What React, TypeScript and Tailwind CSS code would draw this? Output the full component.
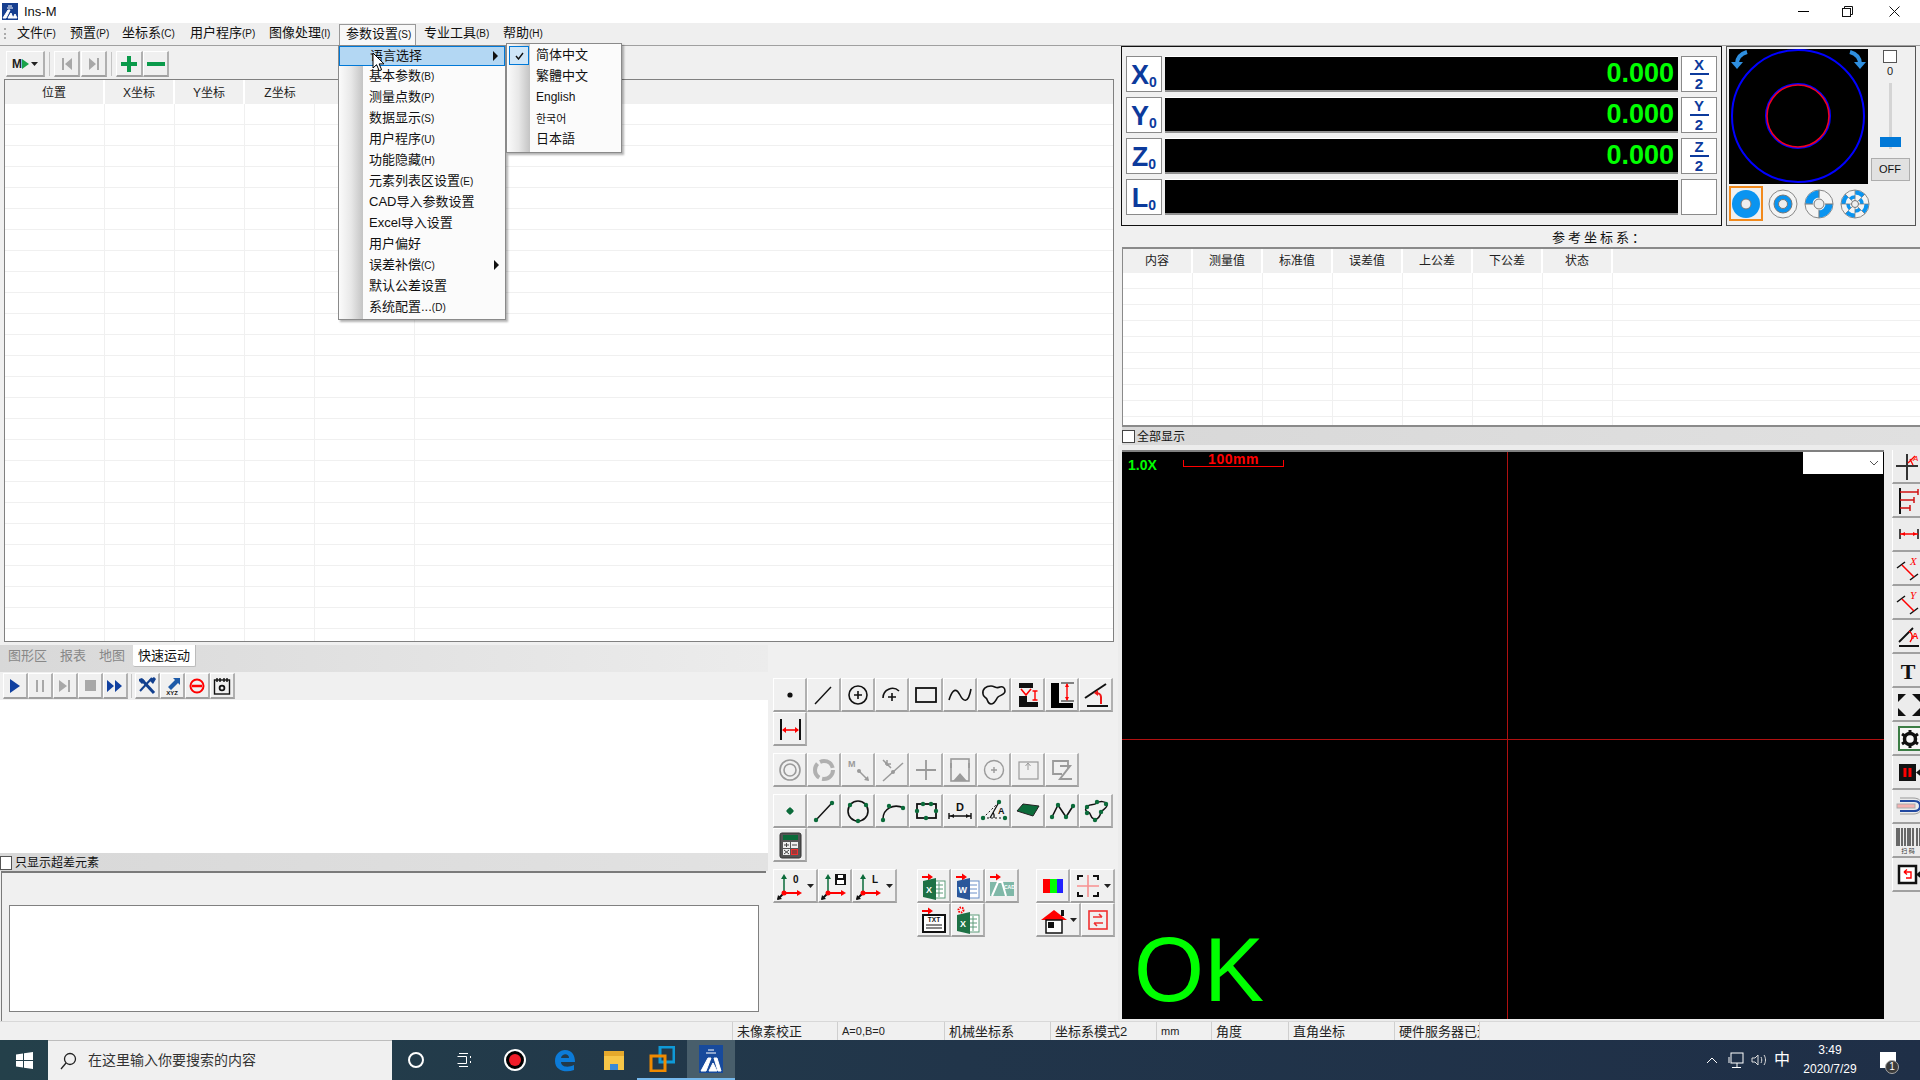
import type { ReactNode } from 'react'

const ink = '#111'
const green = '#0b6b3a'
const red = '#f01818'
const gray = '#9a9a9a'

function Ic({ children, size = 28 }: { children: ReactNode; size?: number }) {
  return (
    <svg width={size} height={size} viewBox="0 0 28 28" fill="none" className="shrink-0">
      {children}
    </svg>
  )
}

function Tool({ children, className = 'w-[34px] h-[34px]' }: { children?: ReactNode; className?: string }) {
  return (
    <div className={`flex items-center justify-center shrink-0 overflow-hidden bg-[#f0f0f0] border-t border-l border-r-2 border-b-2 border-t-white border-l-white border-r-[#b0b0b0] border-b-[#a0a0a0] ${className}`}>
      {children}
    </div>
  )
}

const Caret = () => (
  <svg width="7" height="4" viewBox="0 0 7 4" className="ml-[2px] shrink-0"><path d="M0 0h7L3.5 4z" fill="#222" /></svg>
)

const XlsIcon = () => (
  <>
    <rect x="12" y="9" width="13" height="17" fill="#fff" stroke="#5d9c7a" />
    <path d="M15 13h8M15 17h8M15 21h8M19 10v15" stroke="#5d9c7a" />
    <path d="M3 9l13-3v22L3 25z" fill="#1e7145" />
    <text x="6" y="21" fontSize="9" fontWeight="700" fill="#fff" fontFamily="Liberation Sans">X</text>
  </>
)
const RedArrow = () => <path d="M2 4h6V1.5L13 5l-5 3.5V6H2z" fill="#f00" />

const axes = (
  <>
    <path d="M7 22V5" stroke={green} strokeWidth="1.5" />
    <path d="M7 2l-3 5h6z" fill={green} />
    <path d="M7 21h14" stroke="#f00" strokeWidth="2" />
    <path d="M25 21l-5-3v6z" fill="#f00" />
    <path d="M7 21l-6 6" stroke="#111" strokeWidth="2" />
    <path d="M0 28l1-5 4 4z" fill="#111" />
    <circle cx="7" cy="21" r="2.5" fill="#f00" />
  </>
)

const row1: ReactNode[] = [
  <circle cx="14" cy="14" r="2.6" fill={ink} />,
  <path d="M5 23L21 6" stroke={ink} strokeWidth="1.4" />,
  <>
    <circle cx="14" cy="14" r="9" stroke={ink} strokeWidth="1.6" />
    <path d="M14 10v8M10 14h8" stroke={ink} strokeWidth="1.6" />
  </>,
  <>
    <path d="M5 17a9.5 9.5 0 0 1 16-7" stroke={ink} strokeWidth="1.6" />
    <path d="M14 12v8M10 16h8" stroke={ink} strokeWidth="1.6" />
  </>,
  <rect x="4" y="7" width="20" height="14" stroke={ink} strokeWidth="1.8" />,
  <path d="M3 19C7 6 11 8 14 14s8 10 11-6" stroke={ink} strokeWidth="1.6" />,
  <path d="M3 13c-1-5 3-8 8-8 4 0 5 3 9 1 3-1 5 1 5 4 0 4-5 4-7 6-2 2-3 7-7 7-4 0-3-5-5-6-1-1-3-2-3-4z" stroke={ink} strokeWidth="1.6" />,
  <>
    <rect x="5" y="2" width="14" height="5" fill="#111" />
    <path d="M7 8l5 6 5-6" stroke="#f00" strokeWidth="1.6" />
    <path d="M5 15h8v6h11v5H5z" fill="#111" />
    <path d="M21 10v9M18.5 10h5M18.5 19h5" stroke="#f00" strokeWidth="1.4" />
  </>,
  <>
    <path d="M3 2h8v20h14v5H3z" fill="#000" />
    <path d="M13 2h13M13 20h13" stroke="#111" />
    <path d="M19 3v16" stroke="#f00" strokeWidth="1.4" />
    <path d="M19 2l-2 4h4zM19 20l-2-4h4z" fill="#f00" />
  </>,
  <>
    <path d="M3 17L24 3" stroke="#111" strokeWidth="2" />
    <path d="M5 25h21" stroke="#111" strokeWidth="2" />
    <path d="M19 23v-7c0-3-3-4-5-4" stroke={red} strokeWidth="2" />
    <path d="M12 12l4-3v6z" fill={red} />
  </>,
]
const widthIcon = (
  <>
    <path d="M5 4v21M24 4v21" stroke="#111" strokeWidth="2" />
    <path d="M7 15h15" stroke="#f00" strokeWidth="1.6" />
    <path d="M6 15l4-3v6zM23 15l-4-3v6z" fill="#f00" />
  </>
)
const row3: ReactNode[] = [
  <>
    <circle cx="14" cy="14" r="10" stroke={gray} strokeWidth="1.6" />
    <circle cx="14" cy="14" r="6" stroke={gray} strokeWidth="1.6" />
  </>,
  <>
    <circle cx="14" cy="14" r="9" stroke="#b0b0b0" strokeWidth="4" strokeDasharray="16 3" />
  </>,
  <>
    <text x="4" y="11" fontSize="9" fontWeight="700" fill={gray} fontFamily="Liberation Sans">M</text>
    <path d="M14 14l10 10" stroke={gray} strokeWidth="1.5" />
    <circle cx="15" cy="15" r="2" fill={gray} />
    <path d="M25 25l-5-1 4-4z" fill={gray} />
  </>,
  <>
    <path d="M5 25L25 7" stroke={gray} strokeWidth="1.5" />
    <path d="M5 4l8 8M7 8h6M9 4v6" stroke={gray} strokeWidth="1.5" />
    <circle cx="15" cy="16" r="2" fill={gray} />
  </>,
  <path d="M14 4v20M4 14h20" stroke={gray} strokeWidth="1.8" />,
  <>
    <rect x="5" y="3" width="18" height="22" stroke={gray} strokeWidth="1.6" />
    <path d="M7 25l7-8 7 8z" fill={gray} />
    <path d="M5 7v5M23 7v5" stroke={gray} strokeWidth="2" />
  </>,
  <>
    <circle cx="14" cy="14" r="9.5" stroke={gray} strokeWidth="1.4" />
    <path d="M14 11v6M11 14h6" stroke={gray} strokeWidth="1.4" />
  </>,
  <>
    <rect x="5" y="6" width="19" height="17" stroke={gray} strokeWidth="1.2" />
    <path d="M14 7v7M11.5 10l2.5-3 2.5 3" stroke={gray} />
  </>,
  <>
    <path d="M14 18H5V5h15v8" stroke={gray} strokeWidth="1.8" />
    <path d="M12 10h10l-10 13h12" stroke={gray} strokeWidth="2" />
  </>,
]
const dots = (pts: [number, number][]) =>
  pts.map(([x, y], i) => <circle key={i} cx={x} cy={y} r="2.2" fill={green} />)
const row4: ReactNode[] = [
  <>
    <path d="M14 10l4 4-4 4-4-4z" fill={green} />
    <circle cx="14" cy="14" r="2.8" fill={green} />
  </>,
  <>
    <path d="M6 23L21 7" stroke={ink} strokeWidth="1.5" />
    {dots([[6, 23], [22, 6]])}
  </>,
  <>
    <circle cx="14" cy="14" r="10" stroke={ink} strokeWidth="1.6" />
    {dots([[6, 8], [22, 8], [14, 24]])}
  </>,
  <>
    <path d="M5 22c0-10 10-16 21-11" stroke={ink} strokeWidth="1.6" />
    {dots([[5, 23], [11, 9], [25, 11]])}
  </>,
  <>
    <rect x="5" y="7" width="19" height="14" stroke={ink} strokeWidth="1.8" />
    {dots([[11, 7], [19, 7], [5, 14], [24, 14], [14, 21]])}
  </>,
  <>
    <text x="10" y="14" fontSize="11" fontWeight="700" fill={ink} fontFamily="Liberation Sans">D</text>
    <path d="M3 19h22M3 16v6M25 16v6" stroke={ink} strokeWidth="1.4" />
    <path d="M4 19l4-2v4zM24 19l-4-2v4z" fill={ink} />
  </>,
  <>
    <path d="M3 21L19 5M3 21h22" stroke={ink} strokeDasharray="2 2" />
    <path d="M10 21L19 5M14 21a9 9 0 0 0-1-6" stroke={ink} strokeWidth="1.3" />
    <text x="18" y="17" fontSize="9" fontWeight="700" fill={ink} fontFamily="Liberation Sans">A</text>
    {dots([[3, 21], [25, 21], [19, 5]])}
  </>,
  <path d="M3 14L9 7l16 2-6 10z" fill={green} stroke="#222" />,
  <>
    <path d="M4 20L10 8l8 12 7-11" stroke={ink} strokeWidth="1.6" />
    {dots([[4, 20], [10, 8], [18, 20], [25, 9]])}
  </>,
  <>
    <path d="M4 11c2-5 7-2 11-5 3-2 8-2 10 1 1 4-4 5-6 8-1 4-3 8-7 7-5-2-2-6-6-7-2-1-3-2-2-4z" stroke={ink} strokeWidth="1.5" />
    {dots([[5, 10], [15, 5], [24, 7], [19, 15], [13, 23], [5, 16]])}
  </>,
]
const calcIcon = (
  <>
    <rect x="4" y="2" width="21" height="25" rx="2" fill="#555" stroke="#333" />
    <rect x="7" y="4" width="15" height="5" fill={green} />
    <rect x="7" y="11" width="7" height="6" fill="#eee" />
    <rect x="15" y="11" width="7" height="6" fill="#eee" />
    <rect x="7" y="18" width="7" height="6" fill="#eee" />
    <rect x="15" y="18" width="7" height="6" fill="#f03030" />
    <path d="M8 14h5M10.5 12v4M16 14h5M8 19l5 4M13 19l-5 4M16 20h5M16 22h5" stroke="#444" />
  </>
)

const sideTools: ReactNode[] = [
  <>
    <path d="M11 2v26M0 14h22" stroke="#333" strokeWidth="2" />
    <path d="M12 11l7-7M17 13l-3-6" stroke="#f00" strokeWidth="1.3" />
    <text x="17" y="9" fontSize="8" fontStyle="italic" fill="#f00">A</text>
  </>,
  <>
    <path d="M4 2v26" stroke="#111" strokeWidth="2" />
    <path d="M4 6h18M4 14h14M4 22h10M22 3v6M18 11v6M14 19v6" stroke="#d01010" strokeWidth="1.5" />
  </>,
  <>
    <path d="M4 9v10M22 9v10" stroke="#111" strokeWidth="1.5" />
    <path d="M4 14h18" stroke="#f00" strokeWidth="1.5" />
    <path d="M5 14l4-2v4zM21 14l-4-2v4z" fill="#f00" />
  </>,
  <>
    <path d="M1 14l8-6M14 26l8-6" stroke="#111" strokeWidth="1.5" />
    <path d="M6 11l12 12" stroke="#f00" strokeWidth="1.5" />
    <text x="14" y="11" fontSize="11" fontStyle="italic" fill="#f00" fontFamily="Liberation Serif">X</text>
  </>,
  <>
    <path d="M1 14l8-6M14 26l8-6" stroke="#111" strokeWidth="1.5" />
    <path d="M6 11l12 12" stroke="#f00" strokeWidth="1.5" />
    <text x="14" y="11" fontSize="11" fontStyle="italic" fill="#f00" fontFamily="Liberation Serif">Y</text>
  </>,
  <>
    <path d="M3 20L17 6M3 24h20" stroke="#111" strokeWidth="1.8" />
    <path d="M13 9c4 3 4 7 1 11" stroke="#f00" strokeWidth="1.4" />
    <text x="16" y="17" fontSize="9" fontWeight="700" fill="#f00" fontFamily="Liberation Sans">A</text>
  </>,
  <text x="12" y="23" textAnchor="middle" fontSize="22" fontWeight="700" fill="#111" fontFamily="Liberation Serif">T</text>,
  <path d="M2 4h8l-8 8zM24 4h-8l8 8zM2 26h8l-8-8zM24 26h-8l8-8z" fill="#111" />,
  <>
    <rect x="3" y="3" width="25" height="23" stroke="#3c7d45" strokeWidth="2" fill="#f8f8f8" />
    <circle cx="14" cy="15" r="5.5" stroke="#111" strokeWidth="3.5" />
    <path d="M14 6v3M14 21v3M6 10l3 2M22 10l-3 2M6 20l3-2M22 20l-3-2" stroke="#111" strokeWidth="3" />
  </>,
  <>
    <rect x="3" y="6" width="17" height="17" fill="#111" />
    <path d="M9 10v9M14 10v9" stroke="#f00" strokeWidth="3" />
    <path d="M20 14.5l6-5v10z" fill="#111" />
  </>,
  <>
    <path d="M4 9h14c4 0 6 2 6 5s-2 5-6 5H4" stroke="#2148a0" strokeWidth="2" />
    <rect x="1" y="12" width="18" height="4" fill="#f4b0b0" stroke="#aaa" />
    <path d="M4 6h13c6 0 9 3 9 8s-3 8-9 8H4" stroke="#999" />
  </>,
  <>
    <path d="M1 2v18M3 2v18M6 2v18M9 2v18M12 2v18M14 2v18M17 2v18M21 2v18M24 2v18" stroke="#111" strokeWidth="1.2" />
    <text x="12" y="27" textAnchor="middle" fontSize="6" fill="#333" fontFamily="Noto Sans CJK SC">扫 码</text>
  </>,
  <>
    <rect x="3" y="6" width="17" height="17" fill="#fff" stroke="#111" strokeWidth="2.5" />
    <path d="M8 12h7v6h-5M8 12l3-2.5M8 12l3 2.5" stroke="#f00" strokeWidth="1.4" />
    <path d="M20 14.5l6-5v10z" fill="#111" />
  </>,
]

function Sub({ text, tail }: { text: string; tail?: string }) {
  return (
    <>
      {text}
      {tail && <span className="text-[10px]">{tail}</span>}
    </>
  )
}

function TitleBar() {
  return (
    <div className="flex items-center h-[23px] bg-white shrink-0 pl-[2px]">
      <svg width="16" height="17" viewBox="0 0 16 17">
        <rect width="16" height="17" fill="#173f8f" />
        <path d="M1 15L6 7h2L4 15zM6 15l3-5 2 5zM11 15l2-4 2 4zM5 5h6M6 3h4" stroke="#fff" strokeWidth="1" fill="#fff" />
      </svg>
      <span className="ml-[6px] text-[13px] text-[#111]">Ins-M</span>
      <div className="ml-auto flex items-center">
        <span className="w-[11px] h-px bg-black mr-[33px]" />
        <svg width="11" height="11" viewBox="0 0 11 11" className="mr-[36px]" fill="none" stroke="#111">
          <path d="M2.5 2.5V.5h8v8h-2" />
          <rect x=".5" y="2.5" width="8" height="8" fill="#fff" />
        </svg>
        <svg width="11" height="11" viewBox="0 0 11 11" className="mr-[20px]" stroke="#111"><path d="M.5.5l10 10M10.5.5l-10 10" /></svg>
      </div>
    </div>
  )
}

const menus: [string, string, string][] = [
  ['文件', '(F)', 'w-[53px]'],
  ['预置', '(P)', 'w-[52px]'],
  ['坐标系', '(C)', 'w-[68px]'],
  ['用户程序', '(P)', 'w-[79px]'],
  ['图像处理', '(I)', 'w-[70px]'],
  ['参数设置', '(S)', 'w-[77px] mr-[8px]'],
  ['专业工具', '(B)', 'w-[79px]'],
  ['帮助', '(H)', 'w-[60px]'],
]

function MenuBar() {
  return (
    <div className="flex items-center h-[23px] shrink-0 bg-[#efefef] border-b border-[#a0a0a0] pl-[4px] pb-[2px]">
      <div className="w-[2px] h-[11px] mr-[11px] border-l-2 border-dotted border-[#aaa]" />
      {menus.map(([t, k, w]) =>
        t === '参数设置' ? (
          <div key={t} className={`${w} flex items-center h-[21px] mt-[3px] pl-[6px] pb-[2px] bg-[#f8f8f8] border border-b-0 border-[#999] text-[13px]`}>
            <Sub text={t} tail={k} />
          </div>
        ) : (
          <div key={t} className={`${w} text-[13px] text-[#111]`}>
            <Sub text={t} tail={k} />
          </div>
        ),
      )}
    </div>
  )
}

function LeftTable() {
  const cols = ['w-[100px]', 'w-[70px]', 'w-[70px]', 'w-[70px]', 'w-[100px]']
  const head = ['位置', 'X坐标', 'Y坐标', 'Z坐标', '']
  return (
    <div className="h-[563px] mx-[4px] border border-[#808080] bg-white overflow-hidden">
      <div className="flex h-[24px] bg-[#f0f0f0]">
        {head.map((h, i) => (
          <div key={i} className={`${cols[i]} flex items-center justify-center pt-px text-[12px] text-[#222] ${i < 3 ? 'border-r-2 border-white' : ''}`}>{h}</div>
        ))}
      </div>
      {Array.from({ length: 26 }).map((_, r) => (
        <div key={r} className="flex h-[21px] border-b border-[#f0f0f0]">
          {cols.map((c, i) => <div key={i} className={`${c} border-r border-[#f0f0f0]`} />)}
        </div>
      ))}
    </div>
  )
}

function TopToolbar() {
  return (
    <div className="flex items-center h-[33px] pl-[6px] pt-[3px] shrink-0">
      <Tool className="w-[39px] h-[26px]">
        <span className="text-[12px] font-bold text-[#222] leading-none">M</span>
        <svg width="7" height="10" viewBox="0 0 7 10"><path d="M0 0l7 5-7 5z" fill="#1aa34a" /></svg>
        <Caret />
      </Tool>
      <div className="w-px h-[24px] bg-[#c4c4c4] mx-[4px]" />
      <Tool className="w-[26px] h-[26px]">
        <svg width="12" height="12" viewBox="0 0 12 12"><path d="M1 0h2v12H1zM11 0v12L4 6z" fill="#a8a8a8" /></svg>
      </Tool>
      <Tool className="w-[26px] h-[26px] ml-[1px]">
        <svg width="12" height="12" viewBox="0 0 12 12"><path d="M9 0h2v12H9zM1 0v12l7-6z" fill="#a8a8a8" /></svg>
      </Tool>
      <div className="w-px h-[24px] bg-[#c4c4c4] mx-[4px]" />
      <Tool className="w-[27px] h-[26px]">
        <svg width="18" height="18" viewBox="0 0 18 18"><path d="M7 1h4v6h6v4h-6v6H7v-6H1V7h6z" fill="#0a9a4a" /></svg>
      </Tool>
      <Tool className="w-[26px] h-[26px]">
        <svg width="18" height="6" viewBox="0 0 18 6"><rect width="18" height="4" y="1" fill="#0a9a4a" /></svg>
      </Tool>
    </div>
  )
}

function RunBar() {
  const b = 'w-[25px] h-[26px]'
  return (
    <div className="flex items-center h-[28px] pl-[3px] shrink-0">
      <Tool className={b}><svg width="12" height="14" viewBox="0 0 12 14"><path d="M1 0l10 7-10 7z" fill="#1040a0" /></svg></Tool>
      <Tool className={b}><svg width="10" height="12" viewBox="0 0 10 12"><path d="M1 0h2v12H1zM7 0h2v12H7z" fill="#a8a8a8" /></svg></Tool>
      <Tool className={b}><svg width="12" height="12" viewBox="0 0 12 12"><path d="M0 0l8 6-8 6zM9 0h2v12H9z" fill="#a8a8a8" /></svg></Tool>
      <Tool className={b}><div className="w-[11px] h-[11px] bg-[#a8a8a8]" /></Tool>
      <Tool className={b}><svg width="16" height="12" viewBox="0 0 16 12"><path d="M0 0l7 6-7 6zM8 0l7 6-7 6z" fill="#1040a0" /></svg></Tool>
      <div className="w-px h-[24px] bg-[#c4c4c4] mx-[3px]" />
      <Tool className={b}>
        <svg width="20" height="20" viewBox="0 0 20 20" fill="none">
          <path d="M5 4l12 13" stroke="#12408f" strokeWidth="3" />
          <path d="M15 2L3 15" stroke="#12408f" strokeWidth="2" />
          <path d="M2 3l3-1 3 3-3 3-3-3zM12 4l5-3 2 2-3 5z" fill="#12408f" />
        </svg>
      </Tool>
      <Tool className={b}>
        <svg width="20" height="20" viewBox="0 0 20 20">
          <path d="M6 11l7-7-2-2h7v7l-2-2-7 7z" fill="#1d5aa8" />
          <text x="10" y="19" textAnchor="middle" fontSize="6" fontWeight="700" fill="#111" fontFamily="Liberation Sans">XYZ</text>
        </svg>
      </Tool>
      <Tool className={b}>
        <svg width="16" height="16" viewBox="0 0 16 16" fill="none"><circle cx="8" cy="8" r="6.5" stroke="#f00" strokeWidth="2" /><path d="M3 8h10" stroke="#f00" strokeWidth="2.5" /></svg>
      </Tool>
      <Tool className={b}>
        <svg width="18" height="18" viewBox="0 0 18 18" fill="none">
          <rect x="1.5" y="3" width="15" height="14" stroke="#111" strokeWidth="1.4" />
          <path d="M4 1v4M7 1v4M11 1v4M14 1v4" stroke="#111" strokeWidth="1.4" />
          <circle cx="9" cy="11" r="2.4" stroke="#111" strokeWidth="1.8" />
        </svg>
      </Tool>
    </div>
  )
}

function Palette() {
  const rowCls = 'flex'
  return (
    <div className="w-[350px] shrink-0 pl-[5px] pt-[33px]">
      <div className={rowCls}>{row1.map((c, i) => <Tool key={i}><Ic>{c}</Ic></Tool>)}</div>
      <div className={rowCls}><Tool><Ic>{widthIcon}</Ic></Tool></div>
      <div className={`${rowCls} mt-[7px]`}>{row3.map((c, i) => <Tool key={i}><Ic>{c}</Ic></Tool>)}</div>
      <div className={`${rowCls} mt-[7px]`}>{row4.map((c, i) => <Tool key={i}><Ic>{c}</Ic></Tool>)}</div>
      <div className={rowCls}><Tool><Ic>{calcIcon}</Ic></Tool></div>
      <div className="flex mt-[7px]">
        <div className="flex w-[123px]">
          <Tool className="w-[45px] h-[34px]">
            <Ic>{axes}<text x="16" y="11" fontSize="10" fontWeight="700" fill="#111" fontFamily="Liberation Sans">0</text></Ic>
            <Caret />
          </Tool>
          <Tool>
            <Ic>
              {axes}
              <rect x="14" y="2" width="11" height="11" fill="#111" />
              <rect x="17" y="3" width="5" height="3" fill="#fff" />
              <rect x="16" y="8" width="7" height="4" fill="#fff" />
            </Ic>
          </Tool>
          <Tool className="w-[45px] h-[34px]">
            <Ic>{axes}<text x="16" y="11" fontSize="10" fontWeight="700" fill="#111" fontFamily="Liberation Sans">L</text></Ic>
            <Caret />
          </Tool>
        </div>
        <div className="ml-[21px] w-[102px]">
          <div className="flex">
            <Tool><Ic><RedArrow /><XlsIcon /></Ic></Tool>
            <Tool>
              <Ic>
                <RedArrow />
                <rect x="12" y="9" width="13" height="17" fill="#fff" stroke="#6a8fc8" />
                <path d="M15 13h8M15 17h8M15 21h8" stroke="#6a8fc8" />
                <path d="M3 9l13-3v22L3 25z" fill="#2b579a" />
                <text x="4.5" y="21" fontSize="9" fontWeight="700" fill="#fff" fontFamily="Liberation Sans">W</text>
              </Ic>
            </Tool>
            <Tool>
              <Ic>
                <RedArrow />
                <rect x="2" y="10" width="24" height="14" fill="#7fb8a8" />
                <path d="M4 24l6-14h4l4 14" stroke="#fff" strokeWidth="2" />
                <text x="16" y="17" fontSize="5" fontWeight="700" fill="#fff" fontFamily="Liberation Sans">CAD</text>
              </Ic>
            </Tool>
          </div>
          <div className="flex">
            <Tool>
              <Ic>
                <RedArrow />
                <rect x="3" y="9" width="22" height="17" fill="#fff" stroke="#111" strokeWidth="2" />
                <text x="14" y="16" textAnchor="middle" fontSize="6.5" fontWeight="700" fill="#111" fontFamily="Liberation Sans">TXT</text>
                <path d="M6 19h16M6 22h16" stroke="#111" />
              </Ic>
            </Tool>
            <Tool>
              <Ic>
                <circle cx="7" cy="4" r="2.5" stroke="#f00" strokeWidth="2" strokeDasharray="1.5 1" />
                <XlsIcon />
              </Ic>
            </Tool>
          </div>
        </div>
        <div className="ml-[17px] w-[79px]">
          <div className="flex">
            <Tool>
              <svg width="20" height="14"><rect width="7" height="14" fill="#f00" /><rect x="7" width="7" height="14" fill="#0f0" /><rect x="14" width="6" height="14" fill="#22f" /></svg>
            </Tool>
            <Tool className="w-[45px] h-[34px]">
              <Ic>
                <path d="M4 8V4h5M19 4h5v4M4 20v4h5M19 24h5v-4" stroke="#111" strokeWidth="2" />
                <path d="M14 3v22M3 14h22" stroke="#f79090" strokeWidth="1.6" />
              </Ic>
              <Caret />
            </Tool>
          </div>
          <div className="flex">
            <Tool className="w-[45px] h-[34px]">
              <Ic>
                <path d="M1 14L14 4l13 10z" fill="#f00" />
                <rect x="21" y="4" width="3" height="6" fill="#111" />
                <rect x="6" y="14" width="16" height="13" fill="#fff" stroke="#111" strokeWidth="1.5" />
                <rect x="8" y="16" width="6" height="6" fill="#111" />
              </Ic>
              <Caret />
            </Tool>
            <Tool>
              <svg width="22" height="22" viewBox="0 0 22 22" fill="none" stroke="#f03030">
                <rect x="2" y="2" width="18" height="18" strokeWidth="1.6" />
                <path d="M6 8h9M12 5l3 3M16 14H7M10 17l-3-3" strokeWidth="1.6" />
              </svg>
            </Tool>
          </div>
        </div>
      </div>
    </div>
  )
}

function BottomLeft() {
  const tabs = [['图形区', 'w-[52px] pl-[8px]'], ['报表', 'w-[39px] pl-[8px]'], ['地图', 'w-[42px] pl-[8px]']]
  return (
    <div className="w-[768px] shrink-0 flex flex-col">
      <div className="flex h-[27px] bg-gradient-to-r from-[#d8d8d8] to-[#ececec] text-[13px] text-[#888] shrink-0">
        {tabs.map(([t, c]) => <div key={t} className={`${c} flex items-center h-[21px]`}>{t}</div>)}
        <div className="w-[63px] h-[22px] flex items-center justify-center bg-white text-[#111] rounded-b-[2px] border-b border-r border-[#bbb]">快速运动</div>
      </div>
      <RunBar />
      <div className="h-[153px] bg-white shrink-0" />
      <div className="flex items-center h-[18px] bg-gradient-to-r from-[#d8d8d8] to-[#e2e2e2] shrink-0 text-[12px] text-[#111] pt-px">
        <div className="w-[12px] h-[14px] bg-white border border-[#555] mr-[3px]" />
        只显示超差元素
      </div>
      <div className="flex-1 border-t-2 border-l border-[#7a7a7a] ml-px mr-[2px] pt-[32px] pl-[7px] pr-[7px] pb-[8px]">
        <div className="w-full h-[107px] bg-white border border-[#808080]" />
      </div>
    </div>
  )
}

function Axis({ a }: { a: string }) {
  return (
    <div className="w-[36px] h-[36px] shrink-0 flex items-end justify-center bg-white border border-[#8a8a8a] pb-[2px] font-bold text-[#0c3a9c] leading-none">
      <span className="text-[27px]">{a}</span>
      <span className="text-[14px]">0</span>
    </div>
  )
}

function Half({ a }: { a: string }) {
  return (
    <div className="w-[36px] h-[36px] shrink-0 ml-[3px] flex flex-col items-center justify-center bg-white border border-[#8a8a8a] font-bold text-[#0c3a9c] text-[15px] leading-none">
      <span>{a}</span>
      <div className="w-[19px] h-[2px] bg-[#0c3a9c] my-px shrink-0" />
      <span>2</span>
    </div>
  )
}

function Readout() {
  const rows = ['X', 'Y', 'Z', 'L']
  return (
    <div className="w-[601px] h-[180px] border border-[#111] pt-[9px] pl-[4px] shrink-0">
      {rows.map((a) => (
        <div key={a} className="flex h-[36px] mb-[5px]">
          <Axis a={a} />
          <div className="w-[513px] ml-[3px] flex items-center justify-end pr-[4px] bg-black border-t border-t-white border-b-2 border-b-[#909090] text-[#00ff00] text-[27px] font-bold leading-none">
            {a !== 'L' && '0.000'}
          </div>
          {a !== 'L' ? <Half a={a} /> : <div className="w-[36px] h-[36px] ml-[3px] bg-white border border-[#8a8a8a]" />}
        </div>
      ))}
    </div>
  )
}

function RingIcon({ kind }: { kind: number }) {
  const blue = '#0a94f0'
  return (
    <svg width="30" height="30" viewBox="0 0 30 30" fill="none">
      <circle cx="15" cy="15" r="14" fill={kind === 0 ? blue : '#f4f4f4'} stroke="#888" strokeWidth={kind === 0 ? 0 : 1} />
      {kind === 0 && <circle cx="15" cy="15" r="5" fill="#eee" stroke="#777" />}
      {kind === 1 && (
        <>
          <circle cx="15" cy="15" r="9" fill={blue} stroke="#777" />
          <circle cx="15" cy="15" r="4.5" fill="#eee" stroke="#777" />
        </>
      )}
      {kind === 2 && (
        <>
          <circle cx="15" cy="15" r="10" stroke={blue} strokeWidth="7" strokeDasharray="15.7 15.7" />
          <path d="M15 1v8M15 21v8M1 15h8M21 15h8" stroke="#777" />
          <circle cx="15" cy="15" r="5" fill="#eee" stroke="#777" />
        </>
      )}
      {kind === 3 && (
        <>
          <circle cx="15" cy="15" r="11.5" stroke={blue} strokeWidth="4" strokeDasharray="9 9" />
          <circle cx="15" cy="15" r="7" stroke={blue} strokeWidth="3.5" strokeDasharray="5.5 5.5" strokeDashoffset="5.5" />
          <path d="M15 1v28M1 15h28M5 5l20 20M25 5L5 25" stroke="#777" strokeWidth=".7" />
          <circle cx="15" cy="15" r="3.5" fill="#eee" stroke="#777" />
        </>
      )}
    </svg>
  )
}

function LightPanel() {
  return (
    <div className="w-[190px] h-[180px] border border-[#555] flex pl-[2px] pt-[2px] shrink-0">
      <div className="w-[139px] shrink-0">
        <svg width="139" height="135" viewBox="0 0 139 135" className="block bg-black">
          <circle cx="69" cy="67" r="66" fill="none" stroke="#0000ff" strokeWidth="2" />
          <circle cx="69" cy="67" r="32" fill="none" stroke="#0000ff" strokeWidth="2" />
          <circle cx="69" cy="67" r="31" fill="none" stroke="#f00020" strokeWidth="1.6" />
          <path d="M18 3c-7 2-10 7-10 12" stroke="#2f8fe0" strokeWidth="4" fill="none" />
          <path d="M2 13h12l-6 7z" fill="#2f8fe0" />
          <path d="M121 3c7 2 10 7 10 12" stroke="#2f8fe0" strokeWidth="4" fill="none" />
          <path d="M125 13h12l-6 7z" fill="#2f8fe0" />
        </svg>
        <div className="flex items-center mt-[2px]">
          <div className="w-[35px] h-[35px] border-2 border-[#f28a1c] flex items-center justify-center"><RingIcon kind={0} /></div>
          <div className="ml-[5px]"><RingIcon kind={1} /></div>
          <div className="ml-[6px]"><RingIcon kind={2} /></div>
          <div className="ml-[6px]"><RingIcon kind={3} /></div>
        </div>
      </div>
      <div className="flex-1 flex flex-col items-center pr-[3px]">
        <div className="w-[14px] h-[13px] bg-white border border-[#555] mt-px" />
        <div className="text-[11px] leading-none mt-[3px] text-[#222]">0</div>
        <div className="relative w-[3px] h-[66px] bg-[#d4d4d4] mt-[6px]">
          <div className="absolute left-[-9px] top-[54px] w-[21px] h-[10px] bg-[#0078d7]" />
        </div>
        <div className="w-[39px] h-[23px] mt-[9px] flex items-center justify-center bg-[#e1e1e1] border border-[#adadad] text-[11px] text-[#111]">OFF</div>
      </div>
    </div>
  )
}

function ResultTable() {
  const head = ['内容', '测量值', '标准值', '误差值', '上公差', '下公差', '状态']
  return (
    <div className="h-[180px] ml-[4px] border-t-2 border-b-2 border-l border-[#8a8a8a] bg-white overflow-hidden">
      <div className="flex h-[24px] bg-[#f0f0f0]">
        {head.map((h) => (
          <div key={h} className="w-[70px] flex items-center justify-center text-[12px] text-[#222] border-r-2 border-white">{h}</div>
        ))}
      </div>
      {Array.from({ length: 10 }).map((_, r) => (
        <div key={r} className="flex h-[16px] border-b border-[#f0f0f0]">
          {head.map((h) => <div key={h} className="w-[70px] border-r border-[#f0f0f0]" />)}
        </div>
      ))}
    </div>
  )
}

function Viewport() {
  return (
    <div className="relative w-[762px] bg-black border-t-2 border-[#808080] font-['Liberation_Sans',sans-serif]">
      <div className="absolute left-[385px] top-0 bottom-0 w-px bg-[#b01010]" />
      <div className="absolute left-0 right-0 top-[287px] h-px bg-[#b01010]" />
      <div className="absolute left-[6px] top-[3px] text-[#00ff00] text-[14px] font-bold">1.0X</div>
      <div className="absolute left-[61px] top-[8px] w-[101px] h-[7px] border-b border-l border-r border-[#ff0000]" />
      <div className="absolute left-[61px] top-0 w-[101px] text-center text-[#ff0000] text-[14px] font-bold tracking-[0.5px] leading-[15px]">100mm</div>
      <div className="absolute right-[1px] top-0 w-[80px] h-[22px] bg-white flex items-center justify-end pr-[4px]">
        <svg width="10" height="6" viewBox="0 0 10 6" fill="none" stroke="#555"><path d="M1 1l4 4 4-4" /></svg>
      </div>
      <div className="absolute left-[12px] top-[468px] text-[#00ff00] text-[90px] leading-[101px]">OK</div>
    </div>
  )
}

function RightColumn() {
  return (
    <div className="w-[802px] shrink-0 flex flex-col">
      <div className="flex pl-[3px] gap-[4px] shrink-0">
        <Readout />
        <LightPanel />
      </div>
      <div className="h-[21px] flex items-center justify-center text-[13px] tracking-[3px] text-[#111] pl-[162px] pt-[2px] shrink-0">参考坐标系：</div>
      <ResultTable />
      <div className="flex items-center h-[18px] ml-[4px] bg-gradient-to-r from-[#d8d8d8] to-[#e0e0e0] text-[12px] text-[#111] shrink-0 pt-px">
        <div className="w-[13px] h-[13px] bg-white border border-[#444] mr-[2px]" />
        全部显示
      </div>
      <div className="flex-1 min-h-0 flex pt-[5px] pb-[2px] pl-[4px] bg-[#ececec]">
        <Viewport />
        <div className="ml-[8px] flex-1 flex flex-col overflow-hidden">
          {sideTools.map((c, i) => (
            <div key={i} className="w-[28px] h-[34px] shrink-0 flex items-center pl-[3px] overflow-hidden border-b-2 border-[#a0a0a0] border-l border-l-white">
              <Ic>{c}</Ic>
            </div>
          ))}
        </div>
      </div>
    </div>
  )
}

function StatusBar() {
  const cells = [
    ['w-[105px]', '未像素校正'],
    ['w-[107px]', 'A=0,B=0'],
    ['w-[106px]', '机械坐标系'],
    ['w-[106px]', '坐标系模式2'],
    ['w-[55px]', 'mm'],
    ['w-[77px]', '角度'],
    ['w-[106px]', '直角坐标'],
    ['w-[85px]', '硬件服务器已连接'],
  ]
  return (
    <div className="flex h-[19px] pl-[732px] border-t border-[#d8d8d8] bg-[#f0f0f0] shrink-0 text-[13px] text-[#222] leading-[19px]">
      {cells.map(([w, t], i) => (
        <div key={i} className={`${w} h-full border-l border-[#cfcfcf] pl-[4px] overflow-hidden whitespace-nowrap ${t === 'A=0,B=0' || t === 'mm' ? 'text-[11px]' : ''}`}>{t}</div>
      ))}
      <div className="w-px h-full bg-[#cfcfcf]" />
    </div>
  )
}

function Taskbar() {
  return (
    <div className="flex items-center h-[40px] shrink-0 bg-gradient-to-r from-[#24404a] via-[#21354a] to-[#1f2f47] text-white">
      <div className="w-[48px] flex justify-center">
        <svg width="17" height="17" viewBox="0 0 17 17" fill="#fff"><path d="M0 2.4L7 1.4V8H0zM8 1.2L17 0v8H8zM0 9h7v6.6L0 14.6zM8 9h9v8l-9-1.2z" /></svg>
      </div>
      <div className="w-[344px] h-[40px] flex items-center bg-[#f0f0f0] border-t border-[#bdbdbd] pl-[11px] text-[14px] text-[#333]">
        <svg width="18" height="18" viewBox="0 0 18 18" fill="none" stroke="#222" strokeWidth="1.3"><circle cx="11" cy="7" r="5.5" /><path d="M7 11l-5 6" /></svg>
        <span className="ml-[11px]">在这里输入你要搜索的内容</span>
      </div>
      <div className="flex items-center">
        <div className="w-[47px] flex justify-center"><div className="w-[16px] h-[16px] rounded-full border-2 border-white" /></div>
        <div className="w-[50px] flex justify-center">
          <svg width="16" height="16" viewBox="0 0 16 16" fill="none" stroke="#fff"><path d="M3 1.5h9M3 14.5h9M1.5 4.5h9v7h-9M14.5 4v2M14.5 9v2" /></svg>
        </div>
        <div className="w-[51px] flex justify-center">
          <div className="w-[22px] h-[22px] rounded-full bg-black border-2 border-white flex items-center justify-center"><div className="w-[12px] h-[12px] rounded-full bg-[#f01c28]" /></div>
        </div>
        <div className="w-[50px] flex justify-center">
          <svg width="24" height="24" viewBox="0 0 24 24"><path d="M12 2c7 0 10 5 10 12H8c0 5 7 6 13 3v5c-8 3-19 1-19-9C2 6 7 2 12 2zm-4 8h8c0-5-7-5-8 0z" fill="#0c7bd8" /></svg>
        </div>
        <div className="w-[47px] flex justify-center">
          <svg width="24" height="24" viewBox="0 0 24 24"><path d="M2 4h8l2 3h10v15H2z" fill="#f7c648" /><rect x="2" y="3" width="20" height="5" fill="#e5a92c" /><path d="M8 16h8v6H8z" fill="#3a8ad8" /></svg>
        </div>
        <div className="w-[50px] h-[40px] flex flex-col items-center justify-center border-b-2 border-[#76b9ed]">
          <svg width="26" height="26" viewBox="0 0 26 26" fill="none"><rect x="11" y="1" width="14" height="15" stroke="#0f9ad8" strokeWidth="3" /><rect x="2" y="10" width="14" height="15" stroke="#f08a00" strokeWidth="3" /></svg>
        </div>
        <div className="w-[48px] h-[40px] flex items-center justify-center bg-[#485e6b] border-b-2 border-[#76b9ed]">
          <svg width="24" height="28" viewBox="0 0 24 28"><rect width="24" height="28" fill="#174a9c" /><path d="M2 26L9 13h3L7 26zM10 26l4-8 4 8zM15 13h3l4 13h-3zM7 8h10M9 5h6" stroke="#fff" fill="#fff" /></svg>
        </div>
      </div>
      <div className="ml-auto flex items-center pr-[24px]">
        <svg width="12" height="7" viewBox="0 0 12 7" fill="none" stroke="#fff" className="mr-[10px]"><path d="M1 6l5-5 5 5" /></svg>
        <svg width="16" height="17" viewBox="0 0 16 17" fill="none" stroke="#fff" className="mr-[7px]"><rect x="3" y="1" width="12" height="10" /><path d="M1 5v6M9 11v4M4 15.5h9" /></svg>
        <svg width="16" height="14" viewBox="0 0 16 14" fill="none" stroke="#ddd" className="mr-[7px]"><path d="M1 5h3l3-3v10l-3-3H1zM10 4c1 2 1 4 0 6M13 2c2 3 2 7 0 10" /></svg>
        <span className="text-[16px] mr-[8px]">中</span>
        <div className="w-[64px] flex flex-col items-center text-[12px] leading-[19px]">
          <span>3:49</span>
          <span>2020/7/29</span>
        </div>
        <div className="relative ml-[18px] w-[16px] h-[16px] bg-white">
          <div className="absolute left-[5px] top-[8px] w-[14px] h-[14px] rounded-full bg-[#3a3a3a] border border-[#aaa] text-[10px] leading-[12px] text-center">1</div>
        </div>
      </div>
    </div>
  )
}

function LangMenus() {
  const main: [string, string?][] = [
    ['语言选择'], ['基本参数', '(B)'], ['测量点数', '(P)'], ['数据显示', '(S)'], ['用户程序', '(U)'], ['功能隐藏', '(H)'],
    ['元素列表区设置', '(E)'], ['CAD导入参数设置'], ['Excel导入设置'], ['用户偏好'], ['误差补偿', '(C)'], ['默认公差设置'], ['系统配置...', '(D)'],
  ]
  const langs = ['简体中文', '繁體中文', 'English', '한국어', '日本語']
  return (
    <>
      <div className="absolute left-[338px] top-[45px] w-[168px] h-[275px] bg-[#fbfbfb] border border-[#8a8a8a] shadow-[2px_2px_2px_rgba(0,0,0,0.3)]">
        <div className="absolute left-0 top-0 bottom-0 w-[24px] bg-gradient-to-r from-[#fbfbfb] via-[#e8e8e8] to-[#c4c4c4]" />
        {main.map(([t, k], i) => (
          <div key={t} className={`relative flex items-center pl-[30px] text-[13px] text-[#111] whitespace-nowrap ${i === 0 ? 'h-[20px] mb-px mt-0 bg-[#b3d7f3] border border-[#0078d7] pl-[29px]' : 'h-[21px] pb-[3px]'}`}>
            <Sub text={t} tail={k} />
            {(i === 0 || i === 10) && (
              <svg width="5" height="10" viewBox="0 0 5 10" className="absolute right-[6px]"><path d="M0 0l5 5-5 5z" fill="#111" /></svg>
            )}
          </div>
        ))}
      </div>
      <div className="absolute left-[506px] top-[43px] w-[116px] h-[110px] bg-[#fbfbfb] border border-[#8a8a8a] shadow-[2px_2px_2px_rgba(0,0,0,0.3)] pt-[2px]">
        <div className="absolute left-0 top-0 bottom-0 w-[23px] bg-gradient-to-r from-[#fbfbfb] via-[#e8e8e8] to-[#c4c4c4]" />
        <div className="absolute left-[2px] top-[2px] w-[20px] h-[19px] bg-[#cfe6f8] border border-[#0078d7] flex items-center justify-center">
          <svg width="9" height="8" viewBox="0 0 9 8" fill="none" stroke="#111" strokeWidth="1.4"><path d="M1 4l2.5 3L8 1" /></svg>
        </div>
        {langs.map((t) => (
          <div key={t} className={`relative flex items-center h-[21px] pb-[3px] pl-[29px] text-[#111] ${t === 'English' ? 'text-[12px]' : t === '한국어' ? "text-[11px] font-['Noto_Sans_CJK_KR',sans-serif]" : 'text-[13px]'}`}>{t}</div>
        ))}
      </div>
      <svg width="13" height="20" viewBox="0 0 13 20" className="absolute left-[372px] top-[52px]">
        <path d="M1 1v15l3.6-3.3 2.6 6 2.4-1-2.5-5.8H12z" fill="#fff" stroke="#000" />
      </svg>
    </>
  )
}

export default function App() {
  return (
    <div className="relative w-[1920px] h-[1080px] overflow-hidden flex flex-col bg-[#f0f0f0] text-[#111] font-['Liberation_Sans','Noto_Sans_CJK_SC',sans-serif]">
      <TitleBar />
      <MenuBar />
      <div className="flex flex-1 min-h-0">
        <div className="w-[1118px] shrink-0 flex flex-col">
          <TopToolbar />
          <LeftTable />
          <div className="h-[3px] shrink-0" />
          <div className="flex flex-1 min-h-0">
            <BottomLeft />
            <Palette />
          </div>
        </div>
        <RightColumn />
      </div>
      <StatusBar />
      <Taskbar />
      <LangMenus />
    </div>
  )
}
